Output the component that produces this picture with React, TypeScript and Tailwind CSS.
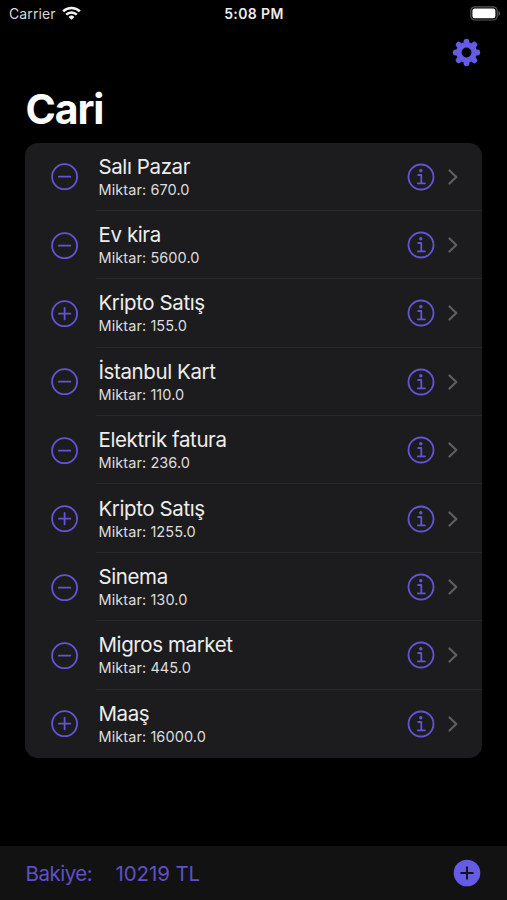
type Entry = {
  title: string
  amount: string
  income?: boolean
}

const entries: Entry[] = [
  { title: 'Salı Pazar', amount: '670.0' },
  { title: 'Ev kira', amount: '5600.0' },
  { title: 'Kripto Satış', amount: '155.0', income: true },
  { title: 'İstanbul Kart', amount: '110.0' },
  { title: 'Elektrik fatura', amount: '236.0' },
  { title: 'Kripto Satış', amount: '1255.0', income: true },
  { title: 'Sinema', amount: '130.0' },
  { title: 'Migros market', amount: '445.0' },
  { title: 'Maaş', amount: '16000.0', income: true },
]

export default function App() {
  return (
    <div className="flex h-[900px] w-[507px] flex-col overflow-hidden bg-black font-['Inter',sans-serif] text-white">
      <StatusBar />

      <header className="flex h-[50px] shrink-0 items-center justify-end pr-[26px]">
        <button aria-label="Ayarlar">
          <GearIcon />
        </button>
      </header>

      <main className="flex-1 px-[25px]">
        <h1 className="h-[65px] pt-[6px] pl-[0.5px] text-[41px] leading-[50px] font-bold tracking-[-1.1px]">Cari</h1>
        <ul className="overflow-hidden rounded-[13px] bg-[#1c1c1e]">
          {entries.map((entry, index) => (
            <EntryRow key={index} entry={entry} last={index === entries.length - 1} />
          ))}
        </ul>
      </main>

      <footer className="flex h-[54.5px] shrink-0 items-center bg-[#121212] pt-px pr-[26px] pl-[25.5px] text-[20.5px] text-[#5e50c8]">
        <span className="w-[90px] pt-[2px] tracking-[-0.5px]">Bakiye:</span>
        <span className="pt-[2px] tracking-[-0.1px]">10219 TL</span>
        <button aria-label="Ekle" className="ml-auto">
          <svg width="28" height="28" viewBox="0 0 28 28" className="block">
            <circle cx="14" cy="14" r="13.3" fill="#655be6" />
            <path d="M14 8.2v11.6M8.2 14h11.6" stroke="#121212" strokeWidth="1.9" strokeLinecap="round" />
          </svg>
        </button>
      </footer>
    </div>
  )
}

function StatusBar() {
  return (
    <div className="grid h-[27.5px] shrink-0 grid-cols-3 items-center pr-[6px] pl-[9px] text-[14px]">
      <div className="flex items-center gap-[6px] text-[#d8d8d8]">
        <span className="tracking-[0.1px]">Carrier</span>
        <svg width="19" height="14" viewBox="0 0 19 14" fill="none" stroke="#f4f4f4" strokeWidth="2.5" className="-mt-[2px]">
          <path d="M1.2 5.3a11.8 11.8 0 0 1 16.6 0" />
          <path d="M4.2 8.7a7.5 7.5 0 0 1 10.6 0" />
          <path d="M9.5 13.8 6.6 10.9a4.1 4.1 0 0 1 5.8 0z" fill="#f4f4f4" stroke="none" />
        </svg>
      </div>
      <span className="-ml-[2px] text-center font-semibold tracking-[0.4px] text-[#ececec]">5:08 PM</span>
      <svg width="31" height="15" viewBox="0 0 31 15" className="ml-auto">
        <rect x="0.8" y="0.8" width="26.4" height="13.2" rx="4" fill="none" stroke="#5b5b5b" strokeWidth="1.2" />
        <rect x="2.4" y="2.5" width="23" height="9.8" rx="2.4" fill="#fff" />
        <path d="M28.5 5v4.8c1-.4 1.6-1.3 1.6-2.4S29.5 5.4 28.5 5z" fill="#5b5b5b" />
      </svg>
    </div>
  )
}

function EntryRow({ entry, last }: { entry: Entry; last: boolean }) {
  return (
    <li className="flex h-[68.4px] items-center pl-[25.5px]">
      <svg width="28" height="28" viewBox="0 0 28 28" fill="none" stroke="#6155d6" strokeLinecap="round" className="mt-px shrink-0">
        <circle cx="13.6" cy="13.7" r="12.5" strokeWidth="1.8" />
        <path d={entry.income ? 'M13.6 8v11.4M7.9 13.7h11.4' : 'M7.9 13.7h11.4'} strokeWidth="1.8" />
      </svg>

      <div className={`ml-[17.5px] flex h-full flex-1 items-center pt-px pr-[24px] pl-[2.5px] ${last ? '' : 'border-b border-[#29292b]'}`}>
        <div className="flex-1 text-[#ededed]">
          <div className="text-[20.5px] leading-[26px] tracking-[-0.4px]">{entry.title}</div>
          <div className="text-[14.5px] leading-[20px] tracking-[0.08px] text-[#dcdcdc]">Miktar: {entry.amount}</div>
        </div>
        <button aria-label="Bilgi">
          <InfoIcon />
        </button>
        <svg width="10" height="16" viewBox="0 0 10 16" fill="none" className="ml-[13px]">
          <path d="M1.5 1.5 8.3 8l-6.8 6.5" stroke="#5f5f62" strokeWidth="2.2" strokeLinecap="round" strokeLinejoin="round" />
        </svg>
      </div>
    </li>
  )
}

function InfoIcon() {
  return (
    <svg width="28" height="28" viewBox="0 0 28 28" fill="none" stroke="#6155d6" className="block">
      <circle cx="14" cy="14" r="12.5" strokeWidth="1.8" />
      <circle cx="13.8" cy="7.7" r="1.7" fill="#6155d6" stroke="none" />
      <path d="M11.2 12h3.1v8.2M10.8 20.4h7.1" strokeWidth="1.8" strokeLinecap="round" strokeLinejoin="round" />
    </svg>
  )
}

function GearIcon() {
  return (
    <svg width="29" height="29" viewBox="-14.5 -14.5 29 29" className="block">
      {/* teeth */}
      <path
        d="M0-10.8V10.8M-10.8 0H10.8M-7.8-7.8 7.8 7.8M-7.8 7.8 7.8-7.8"
        stroke="#655be6"
        strokeWidth="5.8"
        strokeLinecap="round"
      />
      <circle r="10.4" fill="#655be6" />
      <circle r="4.9" fill="#000" />
    </svg>
  )
}
